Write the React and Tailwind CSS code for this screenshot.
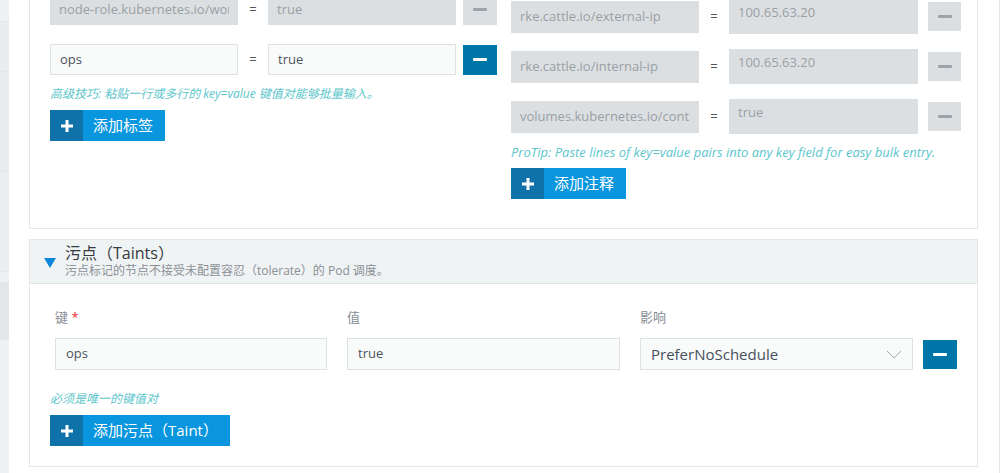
import React from 'react';

const font = { fontFamily: '"Open Sans", "Noto Sans CJK SC", sans-serif' };

const leftRows = [
  { k: 'node-role.kubernetes.io/worker', v: 'true', disabled: true },
  { k: 'ops', v: 'true', disabled: false },
];

const rightRows = [
  { k: 'rke.cattle.io/external-ip', v: '100.65.63.20' },
  { k: 'rke.cattle.io/internal-ip', v: '100.65.63.20' },
  { k: 'volumes.kubernetes.io/controller-managed-attach-detach', v: 'true' },
];

const Minus = ({ disabled, className = '' }) => (
  <button
    className={
      'flex items-center justify-center shrink-0 ' +
      (disabled ? 'bg-[#dcdfe2] ' : 'bg-[#0075a8] ') +
      className
    }
  >
    <span className={'block w-[14px] h-[3px] rounded-[1px] ' + (disabled ? 'bg-[#9ca3a8]' : 'bg-white')} />
  </button>
);

const AddButton = ({ label, className = '' }) => (
  <button className={'flex h-[31px] text-white text-[15px] ' + className}>
    <span className="w-[33px] h-full bg-[#0f72a8] flex items-center justify-center">
      <svg width="12" height="12" viewBox="0 0 12 12">
        <rect x="4.5" y="0" width="3" height="12" fill="white" />
        <rect x="0" y="4.5" width="12" height="3" fill="white" />
      </svg>
    </span>
    <span className="h-full bg-[#0996de] flex items-center pl-[10px] pr-[12px]">{label}</span>
  </button>
);

const Tip = ({ children, className = '' }) => (
  <p className={'italic leading-4 text-[#5cc6cb] ' + className}>{children}</p>
);

// text box that clips its content inside the padding
const Clip = ({ children }) => (
  <span className="block flex-1 min-w-0 overflow-hidden whitespace-nowrap">{children}</span>
);

export default function App() {
  return (
    <div className="flex min-h-[473px] bg-white text-[#4a5560]" style={font}>
      {/* sidebar edge */}
      <div className="w-[9px] shrink-0 flex flex-col bg-[#eef1f1]">
        <div className="h-[22px] border-b border-[#e3e7e7]" />
        <div className="h-[50px] border-b border-[#e3e7e7] bg-[#e9eded]" />
        <div className="h-[100px] border-b border-[#e3e7e7] bg-[#e8ecec]" />
        <div className="h-[100px] border-b border-[#e3e7e7] bg-[#ebeeee]" />
        <div className="h-[11px] border-b border-[#e3e7e7]" />
        <div className="h-[57px] bg-[#e3e7e8]" />
        <div className="flex-1 bg-[#eef1f1]" />
      </div>

      <main className="flex-1 pl-[20px] pr-[21px] pb-[8px]">
        {/* labels / annotations card */}
        <section className="mt-[-40px] border border-[#e4e8ea] bg-white flex pl-[20px] pt-[33px] pb-[29px]">
          <div className="w-[447px] shrink-0">
            <div className="flex flex-col gap-[19px]">
              {leftRows.map((r, i) => (
                <div key={i} className="flex items-center h-[31px]">
                  <div
                    className={
                      'w-[188px] h-[31px] px-[9px] flex items-center text-[13px] ' +
                      (r.disabled
                        ? 'bg-[#dcdfe2] text-[#999fa4]'
                        : 'bg-[#f9fbfb] border border-[#dde2e5]')
                    }
                  >
                    <Clip>{r.k}</Clip>
                  </div>
                  <span className="w-[30px] text-center text-[13px] text-[#555]">=</span>
                  <div
                    className={
                      'w-[188px] h-[31px] px-[9px] flex items-center text-[13px] ' +
                      (r.disabled
                        ? 'bg-[#dcdfe2] text-[#999fa4]'
                        : 'bg-[#f9fbfb] border border-[#dde2e5]')
                    }
                  >
                    {r.v}
                  </div>
                  <Minus disabled={r.disabled} className="ml-[7px] w-[34px] h-[30px]" />
                </div>
              ))}
            </div>
            <Tip className="mt-[11px] text-[12px]">高级技巧: 粘贴一行或多行的 key=value 键值对能够批量输入。</Tip>
            <AddButton label="添加标签" className="mt-[8px]" />
          </div>

          <div className="w-[450px] shrink-0 ml-[14px] pt-[7px]">
            <div className="flex flex-col gap-[19px]">
              {rightRows.map((r, i) => (
                <div key={i} className="flex items-center h-[31px]">
                  <div className="w-[188px] h-[32px] shrink-0 px-[9px] flex items-center bg-[#dcdfe2] text-[#999fa4] text-[13px]">
                    <Clip>{r.k}</Clip>
                  </div>
                  <span className="w-[30px] text-center text-[13px] text-[#555]">=</span>
                  <div className="w-[189px] h-[35px] shrink-0 px-[9px] pt-[5px] bg-[#dcdfe2] text-[#999fa4] text-[13px] leading-4">
                    {r.v}
                  </div>
                  <Minus disabled className="ml-[10px] w-[33px] h-[29px]" />
                </div>
              ))}
            </div>
            <Tip className="mt-[12px] text-[13px]">ProTip: Paste lines of key=value pairs into any key field for easy bulk entry.</Tip>
            <AddButton label="添加注释" className="mt-[8px]" />
          </div>
        </section>

        {/* taints card */}
        <section className="mt-[10px] border border-[#e4e8ea] bg-white">
          <header className="h-[44px] bg-[#f0f3f4] border-b border-[#dee4e7] flex items-center pl-[14px]">
            <svg width="12" height="10" viewBox="0 0 12 10" className="mt-[2px]">
              <polygon points="0,0 12,0 6,10" fill="#0a87d8" />
            </svg>
            <div className="ml-[9px]">
              <h3 className="text-[16px] leading-[19px] text-[#333a40] -mt-[1px]">污点（Taints）</h3>
              <p className="text-[12px] leading-[14px] text-[#8a9096] mt-[1px]">污点标记的节点不接受未配置容忍（tolerate）的 Pod 调度。</p>
            </div>
          </header>

          <div className="px-[20px] pt-[24px] pb-[20px]">
            <div className="pl-[5px]">
              <div className="flex text-[13px] leading-[18px] text-[#888e94]">
                <span className="w-[272px]">
                  键 <span className="text-[#e0302a]">*</span>
                </span>
                <span className="w-[272px] ml-[20px]">值</span>
                <span className="w-[272px] ml-[21px]">影响</span>
              </div>
              <div className="flex items-center mt-[12px]">
                <div className="w-[272px] h-[32px] px-[10px] flex items-center bg-[#f9fbfb] border border-[#dde2e5] text-[13px]">ops</div>
                <div className="w-[273px] h-[32px] ml-[20px] px-[10px] flex items-center bg-[#f9fbfb] border border-[#dde2e5] text-[13px]">true</div>
                <div className="w-[273px] h-[32px] ml-[20px] pl-[10px] pr-[10px] flex items-center justify-between bg-[#f9fbfb] border border-[#dde2e5] text-[15px] text-[#46505c]">
                  <span>PreferNoSchedule</span>
                  <svg width="16" height="9" viewBox="0 0 16 9">
                    <polyline points="1,1 8,8 15,1" fill="none" stroke="#a4aaae" strokeWidth="1" />
                  </svg>
                </div>
                <Minus className="ml-[10px] w-[34px] h-[29px]" />
              </div>
            </div>
            <Tip className="mt-[21px] text-[12px]">必须是唯一的键值对</Tip>
            <AddButton label="添加污点（Taint）" className="mt-[8px]" />
          </div>
        </section>
      </main>
      <div className="w-px shrink-0 bg-[#e2e5e6]" />
    </div>
  );
}
